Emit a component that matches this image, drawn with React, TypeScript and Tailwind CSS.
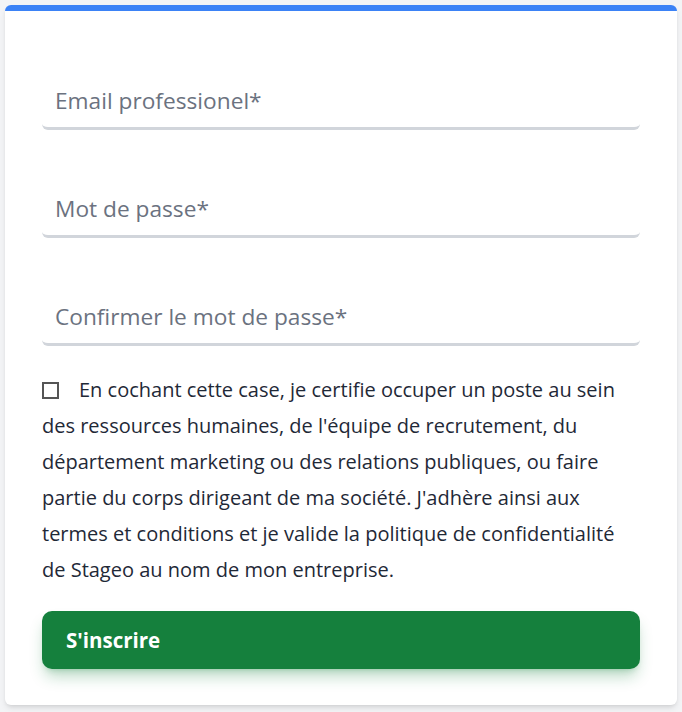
import React from 'react';

const font = { fontFamily: '"Open Sans", "Noto Sans", sans-serif' };

function Field({ placeholder, type = 'text' }: { placeholder: string; type?: string }) {
  return (
    <input
      type={type}
      placeholder={placeholder}
      className="block w-full h-[57px] px-[13px] text-[22.7px] text-gray-800 placeholder:text-[#6b7280] bg-white rounded-md border-b-[3px] border-[#d1d5db] outline-none"
    />
  );
}

export default function App() {
  return (
    <div className="min-h-screen bg-[#f3f4f6] px-[5px] pt-[5px] pb-2" style={font}>
      <div className="bg-white rounded-md shadow-md border-t-[6px] border-[#3b82f6] px-[37px] pt-[62px] pb-[36px]">
        <form className="flex flex-col" onSubmit={(e) => e.preventDefault()}>
          <div className="flex flex-col gap-[51px]">
            <Field placeholder="Email professionel*" type="email" />
            <Field placeholder="Mot de passe*" type="password" />
            <Field placeholder="Confirmer le mot de passe*" type="password" />
          </div>

          <label className="mt-[26px] block text-[20px] leading-[36px] text-[#1f2937]">
            <span className="inline-block align-[-2px] w-[17px] h-[17px] border-2 border-[#555] mr-[20px]" />
            En cochant cette case, je certifie occuper un poste au sein des ressources humaines, de
            l'équipe de recrutement, du département marketing ou des relations publiques, ou faire
            partie du corps dirigeant de ma société. J'adhère ainsi aux termes et conditions et je
            valide la politique de confidentialité de Stageo au nom de mon entreprise.
          </label>

          <button
            type="submit"
            className="mt-[23px] h-[58px] w-full rounded-[10px] bg-[#15803d] text-left pl-[24px] text-[20.5px] font-bold text-white shadow-lg shadow-[#15803d]/30"
          >
            S'inscrire
          </button>
        </form>
      </div>
    </div>
  );
}
